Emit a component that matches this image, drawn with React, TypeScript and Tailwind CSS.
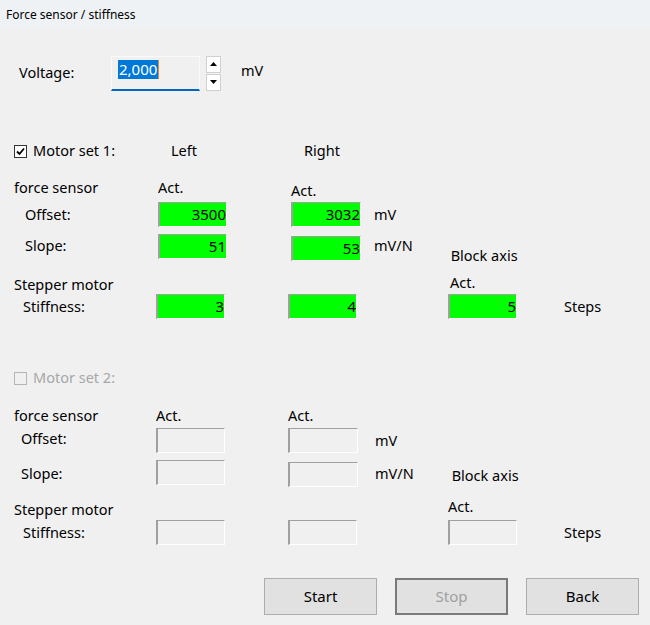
import React from "react";

const font = { fontFamily: '"Noto Sans", "Open Sans", Arial, sans-serif' };

function Field({ value, green, w = "w-[69px]" }: { value?: string; green?: boolean; w?: string }) {
  return (
    <div
      className={`${w} h-[25px] shrink-0 flex items-center justify-end border-t border-l-2 border-t-[#a0a0a0] border-l-[#a0a0a0] border-r border-b border-r-white border-b-white text-[15px] text-black leading-none ${
        green ? "bg-[#00ff00]" : "bg-[#f0f0f0] border-l"
      }`}
    >
      {value}
    </div>
  );
}

function CheckBox({ checked, disabled }: { checked?: boolean; disabled?: boolean }) {
  return (
    <div
      className={`w-[13px] h-[13px] shrink-0 border flex items-center justify-center ${
        disabled ? "border-[#b5b5b5] bg-[#f0f0f0]" : "border-[#333] bg-white"
      }`}
    >
      {checked && (
        <svg width="9" height="9" viewBox="0 0 9 9">
          <path d="M1 4.5 L3.5 7 L8 1.5" fill="none" stroke="#000" strokeWidth="1.8" />
        </svg>
      )}
    </div>
  );
}

function MotorSet({ n, active }: { n: number; active: boolean }) {
  const v = active
    ? { lo: "3500", ro: "3032", ls: "51", rs: "53", l: "3", r: "4", b: "5" }
    : { lo: "", ro: "", ls: "", rs: "", l: "", r: "", b: "" };
  const c1 = active ? "w-[158px]" : "w-[156px]";
  const gap = active ? "ml-[64px]" : "ml-[63px]";
  const unit = active ? "ml-[13px]" : "ml-[17px]";
  return (
    <div>
      <div className="flex items-center h-[20px] pl-[14px]">
        <CheckBox checked={active} disabled={!active} />
        <span className={`ml-[6px] w-[138px] ${active ? "text-black" : "text-[#a7a7a7]"}`}>
          Motor set {n}:
        </span>
        {active && (
          <>
            <span className="w-[133px]">Left</span>
            <span>Right</span>
          </>
        )}
      </div>
      <div className={`flex items-start h-[20px] ${active ? "mt-[16px]" : "mt-[17px]"}`}>
        <span className={`${c1} pl-[14px]`}>force sensor</span>
        <span className={active ? "w-[133px]" : "w-[132px]"}>Act.</span>
        <span className={active ? "mt-[3px]" : ""}>Act.</span>
      </div>
      <div className={`flex items-center h-[25px] ${active ? "mt-[5px]" : "mt-[3px]"}`}>
        <span className={`${c1} ${active ? "pl-[25px]" : "pl-[21px] -mt-[4px]"}`}>Offset:</span>
        <Field value={v.lo} green={active} />
        <div className={gap}>
          <Field value={v.ro} green={active} w="w-[70px]" />
        </div>
        <span className={unit}>mV</span>
      </div>
      <div className="flex items-start h-[27px] mt-[7px]">
        <span className={`${c1} ${active ? "pl-[25px] mt-[1px]" : "pl-[21px] mt-[3px]"}`}>Slope:</span>
        <Field value={v.ls} green={active} />
        <div className={`${gap} mt-[2px]`}>
          <Field value={v.rs} green={active} w="w-[70px]" />
        </div>
        <span className={`${unit} ${active ? "mt-[1px]" : "mt-[3px]"}`}>mV/N</span>
        <span className={`ml-[38px] ${active ? "mt-[11px]" : "mt-[5px]"}`}>Block axis</span>
      </div>
      <div className={`flex items-center h-[18px] ${active ? "mt-[15px]" : "mt-[14px]"}`}>
        <span className="w-[448px] pl-[14px]">Stepper motor</span>
        <span className={active ? "ml-[2px] -mt-[4px]" : "-mt-[6px]"}>Act.</span>
      </div>
      <div className={`flex items-center h-[25px] ${active ? "mt-0" : "mt-[1px]"}`}>
        <span className="w-[156px] pl-[23px]">Stiffness:</span>
        <Field value={v.l} green={active} />
        <div className="ml-[63px]">
          <Field value={v.r} green={active} />
        </div>
        <div className="ml-[91px]">
          <Field value={v.b} green={active} />
        </div>
        <span className="ml-[47px]">Steps</span>
      </div>
    </div>
  );
}

function Button({ label, disabled }: { label: string; disabled?: boolean }) {
  return (
    <div
      className={`w-[113px] h-[37px] flex items-center justify-center text-[15px] bg-[#e1e1e1] ${
        disabled ? "border-2 border-[#7a7a7a] text-[#a0a0a0]" : "border border-[#adadad] text-black"
      }`}
    >
      {label}
    </div>
  );
}

export default function App() {
  return (
    <div className="w-[650px] h-[625px] bg-[#f0f0f0] text-[14.5px] text-black overflow-hidden" style={font}>
      <div className="h-[29px] bg-[#eef2f5] flex items-center pl-[6px] text-[12px] text-black">
        Force sensor / stiffness
      </div>

      <div className="flex items-center h-[36px] mt-[26px]">
        <span className="w-[111px] pl-[19px] -mt-[1px]">Voltage:</span>
        <div className="w-[89px] h-[35px] border border-[#fafafa] border-b-2 border-b-[#0067c0] bg-[#f0f0f0] flex items-start pt-[3px] pl-[6px]">
          <span className="bg-[#0078d7] text-white text-[15px] leading-[19px] px-[1px]">2,000</span>
          <span className="w-[1px] h-[19px] bg-[#e08a3a]" />
        </div>
        <div className="ml-[6px] flex flex-col gap-[1px]">
          <div className="w-[15px] h-[17px] bg-white border border-[#d0d0d0] flex items-center justify-center">
            <svg width="7" height="4" viewBox="0 0 7 4"><path d="M0 4 L3.5 0 L7 4Z" fill="#000" /></svg>
          </div>
          <div className="w-[15px] h-[17px] bg-white border border-[#d0d0d0] flex items-center justify-center">
            <svg width="7" height="4" viewBox="0 0 7 4"><path d="M0 0 L3.5 4 L7 0Z" fill="#000" /></svg>
          </div>
        </div>
        <span className="ml-[20px] -mt-[4px]">mV</span>
      </div>

      <div className="mt-[50px]">
        <MotorSet n={1} active />
      </div>
      <div className="mt-[49px]">
        <MotorSet n={2} active={false} />
      </div>

      <div className="flex mt-[33px] pl-[264px] gap-[18px]">
        <Button label="Start" />
        <Button label="Stop" disabled />
        <Button label="Back" />
      </div>
    </div>
  );
}
